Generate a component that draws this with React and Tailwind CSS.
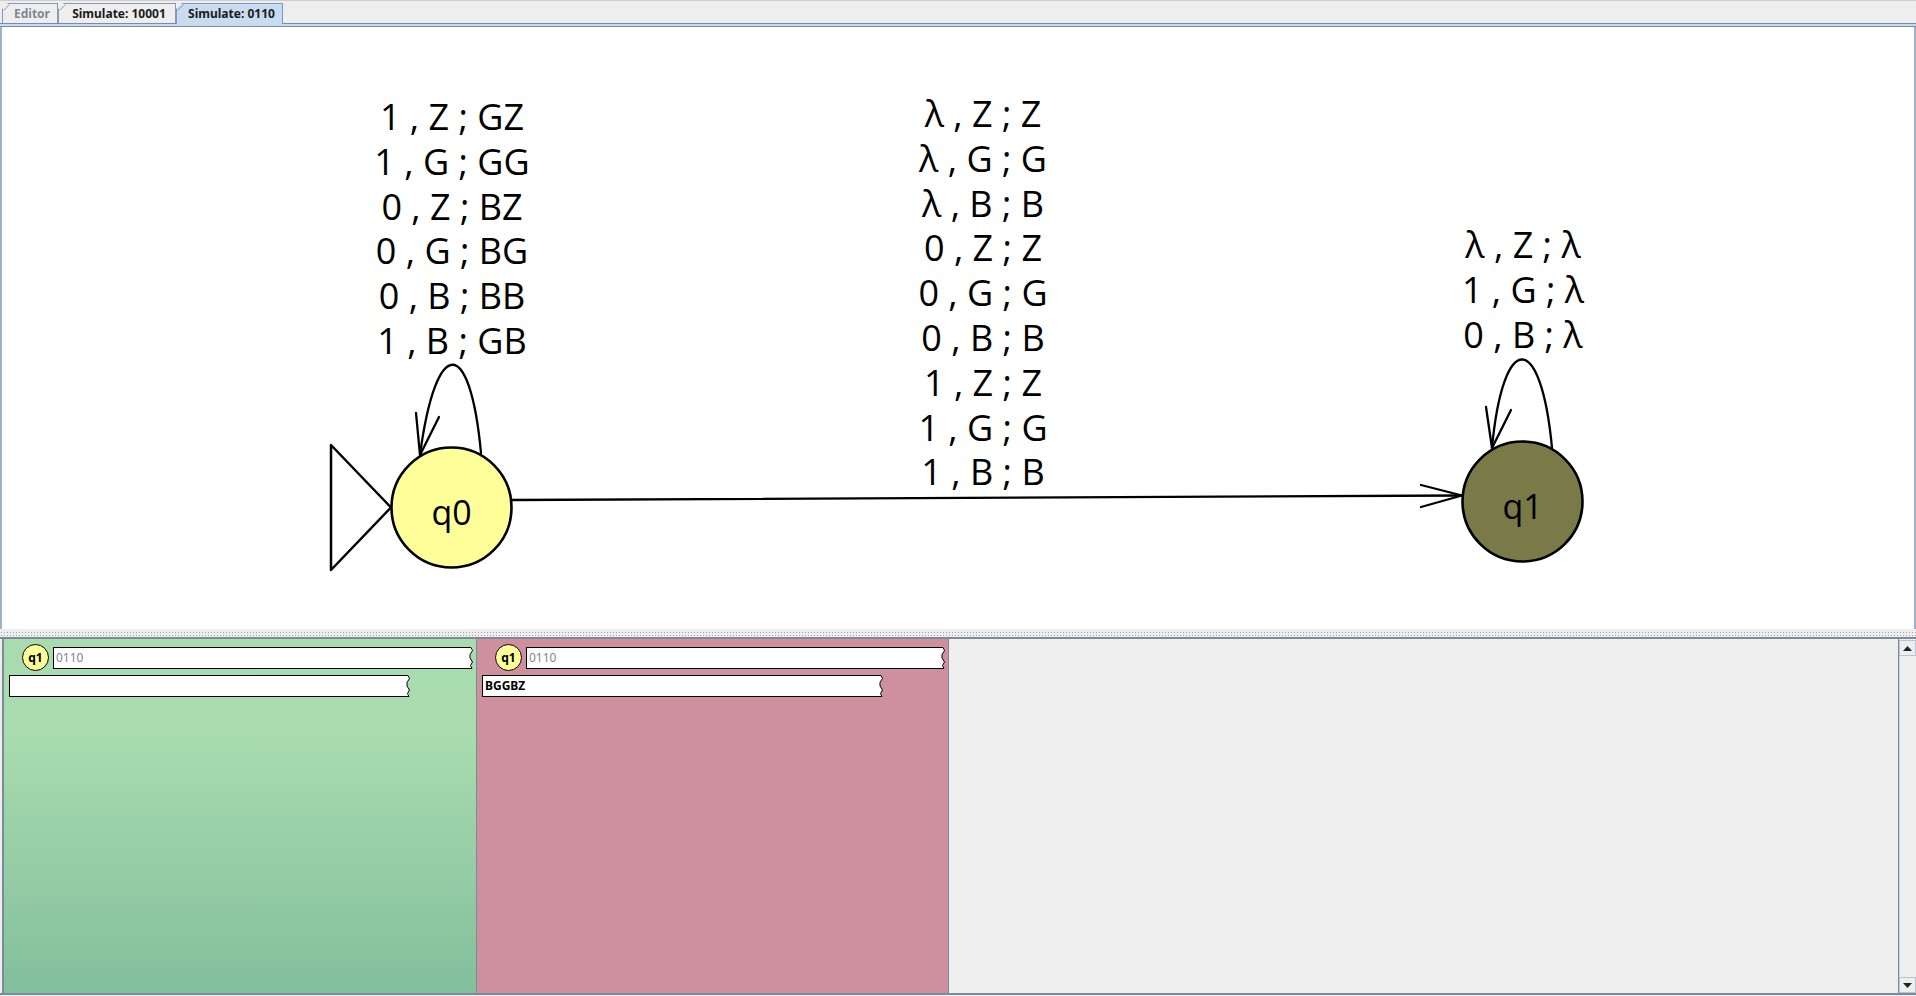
import React from 'react';

const q0Labels = ['1 , Z ; GZ', '1 , G ; GG', '0 , Z ; BZ', '0 , G ; BG', '0 , B ; BB', '1 , B ; GB'];
const midLabels = ['λ , Z ; Z', 'λ , G ; G', 'λ , B ; B', '0 , Z ; Z', '0 , G ; G', '0 , B ; B', '1 , Z ; Z', '1 , G ; G', '1 , B ; B'];
const q1Labels = ['λ , Z ; λ', '1 , G ; λ', '0 , B ; λ'];

const Tab = ({ label, active, disabled, width }) => (
  <div
    className={`relative flex items-center justify-center text-[12px] font-bold border-t border-r border-l [clip-path:polygon(6px_0,100%_0,100%_100%,0_100%,0_6px)] ${
      active ? 'h-[21px] bg-[#c8dbef] border-[#7d97c1] -mb-px' : 'h-[20px] bg-[#eeeeee] border-[#8e9aab]'
    } ${disabled ? 'text-[#7f8893]' : 'text-[#1a1a1a]'}`}
    style={{ width }}
  >
    <svg className="absolute left-0 top-0" width="7" height="7">
      <line x1="0.5" y1="6.5" x2="6.5" y2="0.5" stroke={active ? '#7d97c1' : '#8e9aab'} strokeWidth="1" />
    </svg>
    <span className="pl-[4px]">{label}</span>
  </div>
);

const Tape = ({ text, bold, className }) => (
  <div className={`flex h-[22px] ${className}`}>
    <div
      className={`flex-1 bg-white border border-r-0 border-black flex items-center pl-[2px] text-[12px] leading-none ${
        bold ? 'font-bold text-black' : 'text-[#858585]'
      }`}
    >
      {text}
    </div>
    <svg width="6" height="22" className="shrink-0">
      <path d="M0 0.5 L4 0.5 L5.5 3.5 L3 7.5 L3 11 L5.5 15 L3.5 18.5 L5 21.5 L0 21.5" fill="white" stroke="black" strokeWidth="1" />
    </svg>
  </div>
);

const MiniState = () => (
  <div className="w-[27px] h-[27px] shrink-0 rounded-full bg-[#ffff99] border border-black flex items-center justify-center text-[12px] font-bold text-black">
    q1
  </div>
);

const ConfigPanel = ({ stack, bg, width }) => (
  <div className={`h-full border-r border-[#7b8b9b] ${bg}`} style={{ width }}>
    <div className="flex items-start pl-[18px] pr-[3px] pt-[5px]">
      <MiniState />
      <Tape text="0110" className="flex-1 ml-[4px] mt-[3px]" />
    </div>
    <Tape text={stack} bold className="ml-[5px] mt-[4px] w-[401px]" />
  </div>
);

const Labels = ({ lines, x, y }) =>
  lines.map((t, i) => (
    <text key={i} x={x} y={y + i * 44.8} textAnchor="middle" fontSize="36" fill="black" stroke="none" fontFamily="'Open Sans', 'Noto Sans', sans-serif">
      {t}
    </text>
  ));

const Diagram = () => (
  <svg className="absolute left-0 top-0" width="1912" height="602">
    <g transform="translate(-2,-27)" fill="none" stroke="black" strokeLinecap="round" strokeLinejoin="round">
      <Labels lines={q0Labels} x={452} y={130} />
      <Labels lines={midLabels} x={983} y={127} />
      <Labels lines={q1Labels} x={1523} y={258} />

      <polygon points="331,445 391,507.5 331,570" strokeWidth="2.5" fill="white" />
      <line x1="512" y1="500" x2="1462" y2="495.5" strokeWidth="2.3" />
      <polyline points="1421,485 1462,495.5 1421,507" strokeWidth="2.3" />

      <path d="M481 453 C470 335 436 335 420 455" strokeWidth="2.3" />
      <polyline points="416,413 420,455 439,417" strokeWidth="2.3" />

      <path d="M1552 448 C1541 330 1503 330 1492 448" strokeWidth="2.3" />
      <polyline points="1486,407 1492,448 1511,410" strokeWidth="2.3" />

      <circle cx="451.5" cy="507.5" r="60" fill="#ffff99" strokeWidth="2.6" />
      <circle cx="1522.5" cy="501.5" r="60" fill="#7a7a48" strokeWidth="2.6" />
      <text x="451.5" y="525" textAnchor="middle" fontSize="34" fill="black" stroke="none" fontFamily="'Open Sans', 'Noto Sans', sans-serif">q0</text>
      <text x="1522.5" y="519" textAnchor="middle" fontSize="34" fill="black" stroke="none" fontFamily="'Open Sans', 'Noto Sans', sans-serif">q1</text>
    </g>
  </svg>
);

export default function App() {
  return (
    <div className="w-[1916px] h-[996px] flex flex-col bg-[#eeeeee] overflow-hidden font-['Noto_Sans',sans-serif]">
      {/* tab strip */}
      <div className="h-[23px] border-t border-[#cfcfcf] flex items-end pl-[2px]">
        <Tab label="Editor" disabled width={56} />
        <Tab label="Simulate: 10001" width={118} />
        <Tab label="Simulate: 0110" active width={107} />
      </div>
      <div className="h-px bg-[#6f8dbe]" />
      <div className="h-[2px] bg-[#c8daee]" />
      <div className="h-px bg-[#7c8da3]" />

      {/* canvas */}
      <div className="relative h-[602px] bg-white border-l-2 border-r-2 border-[#9fb0c8]">
        <Diagram />
      </div>

      {/* split divider */}
      <div className="h-[8px] pt-[2px]">
        <div className="h-[5px] bg-[radial-gradient(circle,#9ca3ab_0.7px,transparent_0.9px)] bg-[length:3px_3px]" />
      </div>

      {/* simulation configs */}
      <div className="h-[359px] flex flex-col">
        <div className="h-[2px] bg-[#7b8b9b]" />
        <div className="h-[354px] flex pl-[2px]">
          <div className="flex-1 flex border-l-2 border-[#7b8b9b]">
            <ConfigPanel stack="" width={473} bg="bg-[linear-gradient(to_bottom,#a8dbae_0%,#aadcaf_25%,#82bf9d_100%)]" />
            <ConfigPanel stack="BGGBZ" width={472} bg="bg-[#ce8f9e]" />
            <div className="flex-1 bg-[#eeeeee]" />
          </div>
          <div className="w-[18px] flex flex-col border-l border-[#7b8b9b] bg-[#eeeeee]">
            <div className="h-[16px] mt-px border border-[#b8c4d2] flex items-center justify-center">
              <svg width="9" height="5"><polygon points="0,5 4.5,0 9,5" fill="#222" /></svg>
            </div>
            <div className="flex-1 border-l border-[#c8d4e2]" />
            <div className="h-[16px] border border-[#b8c4d2] flex items-center justify-center">
              <svg width="9" height="5"><polygon points="0,0 4.5,5 9,0" fill="#222" /></svg>
            </div>
          </div>
        </div>
        <div className="h-[2px] bg-[#7b8b9b]" />
      </div>
    </div>
  );
}
